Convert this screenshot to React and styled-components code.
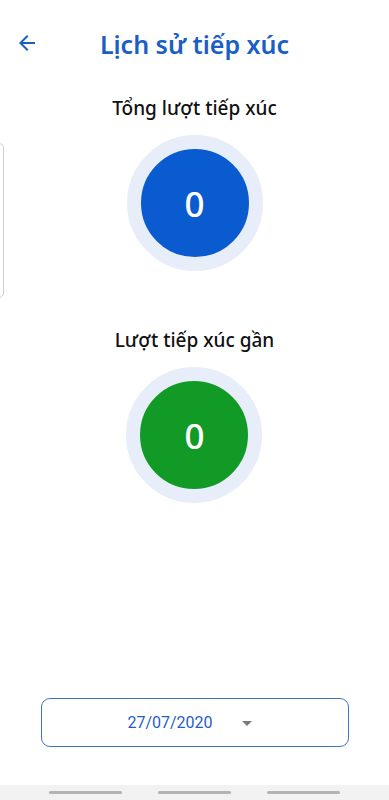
import React from "react";
import styled, { createGlobalStyle } from "styled-components";

const Global = createGlobalStyle`
  html, body { margin: 0; padding: 0; background: #ffffff; }
  body { font-family: "Noto Sans", "Open Sans", sans-serif; }
  * { box-sizing: border-box; }
`;

const Page = styled.div`
  position: relative;
  width: 389px;
  height: 800px;
  display: flex;
  flex-direction: column;
  overflow: hidden;
  background: #fff;
`;

const Header = styled.header`
  position: relative;
  height: 88px;
  display: flex;
  align-items: center;
  justify-content: center;
`;

const BackButton = styled.button`
  position: absolute;
  left: 15px;
  top: 31px;
  width: 24px;
  height: 24px;
  padding: 0;
  border: none;
  background: transparent;
  display: flex;
  align-items: center;
  justify-content: center;
`;

const Title = styled.h1`
  margin: 0;
  font-family: "Noto Sans", "Open Sans", sans-serif;
  font-size: 25px;
  font-weight: 600;
  color: #1a5ec6;
  line-height: 32px;
`;

const Main = styled.main`
  flex: 1;
  display: flex;
  flex-direction: column;
  align-items: center;
  padding-top: 7px;
  gap: 56px;
`;

const Section = styled.section`
  display: flex;
  flex-direction: column;
  align-items: center;
  gap: 14px;
`;

const Label = styled.h2`
  margin: 0;
  font-family: "Noto Sans", "Open Sans", sans-serif;
  font-size: 19px;
  font-weight: 500;
  line-height: 26px;
  color: #111;
`;

const Ring = styled.div`
  width: 136px;
  height: 136px;
  border-radius: 50%;
  border: 14px solid #e7eef9;
  background: ${(p) => p.$color};
  display: flex;
  align-items: center;
  justify-content: center;
`;

const Count = styled.span`
  color: #fff;
  font-family: "Noto Sans", "Open Sans", sans-serif;
  font-size: 35px;
  font-weight: 500;
  line-height: 1;
`;

const SideCard = styled.div`
  position: absolute;
  left: -20px;
  top: 143px;
  width: 24px;
  height: 155px;
  border: 1px solid #cfcfcf;
  border-radius: 5px;
  background: #fff;
`;

const Footer = styled.div`
  display: flex;
  justify-content: center;
  padding-bottom: 38px;
`;

const DateSelect = styled.button`
  width: 308px;
  height: 49px;
  border: 1px solid #3f74c9;
  border-radius: 9px;
  background: #fff;
  display: flex;
  align-items: center;
  justify-content: center;
  gap: 29px;
  padding: 0 10px 0 0;
  font-family: Roboto, "Noto Sans", sans-serif;
  font-size: 16px;
  color: #1f5fc4;
`;

const Caret = styled.span`
  width: 0;
  height: 0;
  border-left: 5px solid transparent;
  border-right: 5px solid transparent;
  border-top: 5px solid #7a7a7a;
  margin-top: 1px;
`;

const NavBar = styled.nav`
  height: 15px;
  background: #f2f2f2;
  display: flex;
  align-items: center;
  justify-content: center;
  gap: 36px;
  padding-bottom: 1px;
`;

const NavLine = styled.span`
  width: 73px;
  height: 3px;
  border-radius: 2px;
  background: #b4b4b4;
`;

export default function App() {
  return (
    <Page>
      <Global />
      <SideCard />
      <Header>
        <BackButton aria-label="back">
          <svg width="24" height="24" viewBox="0 0 24 24">
            <path
              fill="#1a5ec6"
              d="M20 11H7.83l5.59-5.59L12 4l-8 8 8 8 1.41-1.41L7.83 13H20v-2z"
            />
          </svg>
        </BackButton>
        <Title>Lịch sử tiếp xúc</Title>
      </Header>
      <Main>
        <Section>
          <Label>Tổng lượt tiếp xúc</Label>
          <Ring $color="#0a5bcf">
            <Count>0</Count>
          </Ring>
        </Section>
        <Section>
          <Label>Lượt tiếp xúc gần</Label>
          <Ring $color="#129a27">
            <Count>0</Count>
          </Ring>
        </Section>
      </Main>
      <Footer>
        <DateSelect>
          <span>27/07/2020</span>
          <Caret />
        </DateSelect>
      </Footer>
      <NavBar>
        <NavLine />
        <NavLine />
        <NavLine />
      </NavBar>
    </Page>
  );
}
